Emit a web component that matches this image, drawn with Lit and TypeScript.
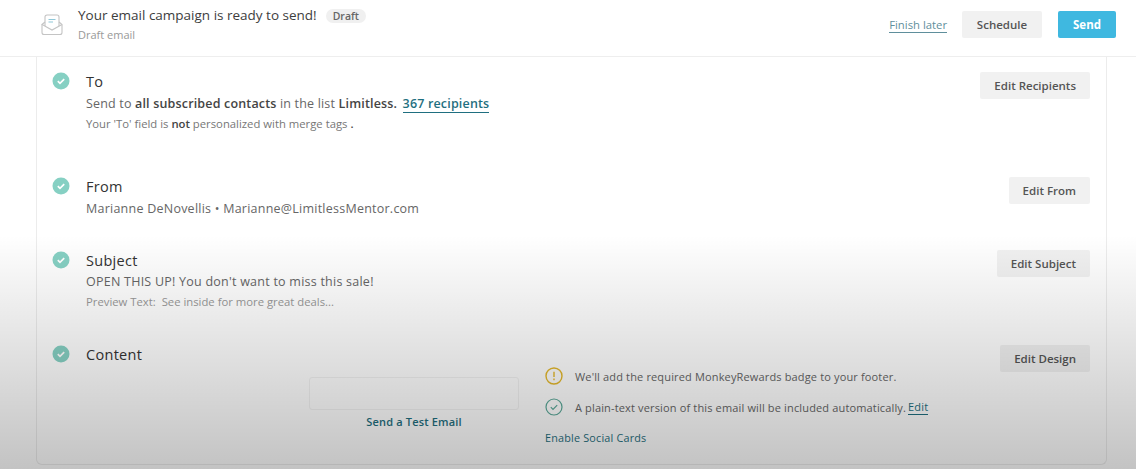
import {LitElement, html, css} from 'lit';
import {customElement} from 'lit/decorators.js';

const check = html`<svg class="step-icon" viewBox="0 0 18 18">
  <circle cx="9" cy="9" r="8.5" fill="#86d0c3"></circle>
  <path d="M5.8 9.2l2.2 2.2 4.2-4.2" fill="none" stroke="#fff" stroke-width="1.7"></path>
</svg>`;

@customElement('app-root')
export class AppRoot extends LitElement {
  static styles = css`
    :host {
      display: block;
      position: relative;
      width: 1136px;
      height: 469px;
      overflow: hidden;
      background: #fff;
      font-family: 'Open Sans', 'Liberation Sans', sans-serif;
      color: #555;
    }
    .shade {
      position: absolute;
      left: 0;
      right: 0;
      top: 235px;
      bottom: 0;
      background: linear-gradient(rgba(0, 0, 0, 0), rgba(0, 0, 0, 0.235));
      pointer-events: none;
    }
    header {
      box-sizing: border-box;
      height: 57px;
      display: flex;
      align-items: flex-start;
      border-bottom: 1px solid #eeeeee;
      padding: 5px 20px 0 41px;
    }
    .mail {
      width: 22px;
      height: 22px;
      margin: 9px 15px 0 0;
    }
    .heading {
      flex: 1;
    }
    .title-line {
      display: flex;
      align-items: center;
      font-size: 13.5px;
      line-height: 20px;
      color: #3d3d3d;
    }
    .badge {
      margin-left: 9px;
      margin-top: 2px;
      padding: 0 7px;
      height: 14px;
      line-height: 14px;
      border-radius: 7px;
      background: #f0f0f0;
      font-size: 10.5px;
      font-weight: 600;
      color: #666;
    }
    .subtitle {
      margin-top: 3px;
      font-size: 11px;
      line-height: 14px;
      color: #999;
    }
    .actions {
      display: flex;
      align-items: center;
      margin-top: 6px;
    }
    .finish {
      font-size: 11.3px;
      line-height: 15px;
      color: #5f8f9c;
      border-bottom: 1px solid #5f8f9c;
      margin-right: 15px;
    }
    button {
      border: none;
      border-radius: 2px;
      height: 27px;
      background: #f1f1f1;
      font: 600 11.5px 'Open Sans', 'Liberation Sans', sans-serif;
      color: #555;
      padding: 0 14px;
      white-space: nowrap;
    }
    .schedule {
      width: 80px;
      padding: 0;
    }
    .send {
      width: 58px;
      padding: 0;
      margin-left: 16px;
      background: #3fb8e0;
      color: #fff;
      font-weight: 700;
    }
    .card {
      box-sizing: border-box;
      height: 408px;
      margin: 0 29px 0 36px;
      padding-top: 15px;
      border: 1px solid #ececec;
      border-top: none;
      border-radius: 0 0 6px 6px;
    }
    .row {
      display: flex;
      align-items: flex-start;
      padding: 0 16px 0 15px;
    }
    .to {
      height: 105px;
    }
    .from {
      height: 73px;
    }
    .subject {
      height: 95px;
    }
    .subject .step-icon,
    .subject .body {
      margin-top: 1px;
    }
    .step-icon {
      width: 18px;
      height: 18px;
      margin-right: 16px;
      flex: none;
    }
    .body {
      flex: 1;
    }
    h2 {
      margin: 0;
      font-size: 14.5px;
      font-weight: 400;
      line-height: 20px;
      color: #333;
      letter-spacing: 0.3px;
    }
    .line {
      font-size: 12.5px;
      line-height: 20px;
      margin-top: 2px;
      color: #666;
      letter-spacing: 0.24px;
    }
    .to .line {
      letter-spacing: 0.17px;
    }
    .subject .line {
      margin-top: 1px;
    }
    .line b {
      font-weight: 600;
      color: #444;
    }
    .count {
      color: #1f6f80;
      font-weight: 600;
      border-bottom: 1px solid #1f6f80;
      margin-left: 2px;
    }
    .note {
      font-size: 11.3px;
      line-height: 14px;
      margin-top: 3px;
      color: #777;
    }
    .note b {
      font-weight: 600;
      color: #444;
    }
    .preview {
      color: #999;
    }
    .content-main {
      display: flex;
      margin-top: 2px;
    }
    .test {
      width: 210px;
      margin: 10px 26px 0 223px;
      text-align: center;
    }
    .field {
      box-sizing: border-box;
      height: 33px;
      border: 1px solid #f2f2f2;
      border-radius: 3px;
    }
    .test-link {
      margin-top: 4px;
      font-size: 11px;
      line-height: 15px;
      font-weight: 600;
      color: #1f6f80;
      letter-spacing: 0.17px;
    }
    .checks {
      display: flex;
      flex-direction: column;
      font-size: 11px;
      color: #666;
      white-space: nowrap;
    }
    .check-row {
      display: flex;
      align-items: center;
      height: 18px;
      margin-bottom: 13px;
      letter-spacing: 0.15px;
    }
    .check-row svg {
      width: 18px;
      height: 18px;
      margin-right: 12px;
    }
    .check-row a {
      color: #1f6f80;
      border-bottom: 1px solid #1f6f80;
      margin-left: 2px;
    }
    .social {
      margin-top: 2px;
      font-size: 10.8px;
      line-height: 14px;
      color: #1f6f80;
      letter-spacing: 0.2px;
    }
  `;

  render() {
    return html`
      <header>
        <svg class="mail" viewBox="0 0 22 22" fill="none" stroke="#c4c4c4" stroke-width="1.1">
          <path d="M1 10.5v8a2 2 0 0 0 2 2h16a2 2 0 0 0 2-2v-8l-3-2.5"></path>
          <path d="M4 8l-3 2.5 10 5.5 10-5.5"></path>
          <path d="M4 12V3a2 2 0 0 1 2-2h10a2 2 0 0 1 2 2v9"></path>
          <path d="M7.5 5.5h7M7.5 8h4.5" stroke="#8fc7d8"></path>
        </svg>
        <div class="heading">
          <div class="title-line">
            <span>Your email campaign is ready to send!</span>
            <span class="badge">Draft</span>
          </div>
          <div class="subtitle">Draft email</div>
        </div>
        <div class="actions">
          <span class="finish">Finish later</span>
          <button class="schedule">Schedule</button>
          <button class="send">Send</button>
        </div>
      </header>
      <div class="card">
        <div class="row to">
          ${check}
          <div class="body">
            <h2>To</h2>
            <div class="line">
              Send to <b>all subscribed contacts</b> in the list <b>Limitless.</b>
              <span class="count">367 recipients</span>
            </div>
            <div class="note">Your 'To' field is <b>not</b> personalized with merge tags <b>.</b></div>
          </div>
          <button>Edit Recipients</button>
        </div>
        <div class="row from">
          ${check}
          <div class="body">
            <h2>From</h2>
            <div class="line">Marianne DeNovellis • Marianne@LimitlessMentor.com</div>
          </div>
          <button>Edit From</button>
        </div>
        <div class="row subject">
          ${check}
          <div class="body">
            <h2>Subject</h2>
            <div class="line">OPEN THIS UP! You don't want to miss this sale!</div>
            <div class="note preview">Preview Text:&nbsp; See inside for more great deals...</div>
          </div>
          <button>Edit Subject</button>
        </div>
        <div class="row">
          ${check}
          <div class="body">
            <h2>Content</h2>
            <div class="content-main">
              <div class="test">
                <div class="field"></div>
                <div class="test-link">Send a Test Email</div>
              </div>
              <div class="checks">
                <div class="check-row">
                  <svg viewBox="0 0 18 18" fill="none" stroke="#e5b92c" stroke-width="1.4">
                    <circle cx="9" cy="9" r="8"></circle>
                    <path d="M9 4.8v5.2M9 11.6v1.6"></path>
                  </svg>
                  We'll add the required MonkeyRewards badge to your footer.
                </div>
                <div class="check-row">
                  <svg viewBox="0 0 18 18" fill="none" stroke="#5aa898" stroke-width="1.2">
                    <circle cx="9" cy="9" r="8"></circle>
                    <path d="M5.8 9.2l2.2 2.2 4.2-4.2"></path>
                  </svg>
                  A plain-text version of this email will be included automatically.
                  <a>Edit</a>
                </div>
                <div class="social">Enable Social Cards</div>
              </div>
            </div>
          </div>
          <button>Edit Design</button>
        </div>
      </div>
      <div class="shade"></div>
    `;
  }
}
